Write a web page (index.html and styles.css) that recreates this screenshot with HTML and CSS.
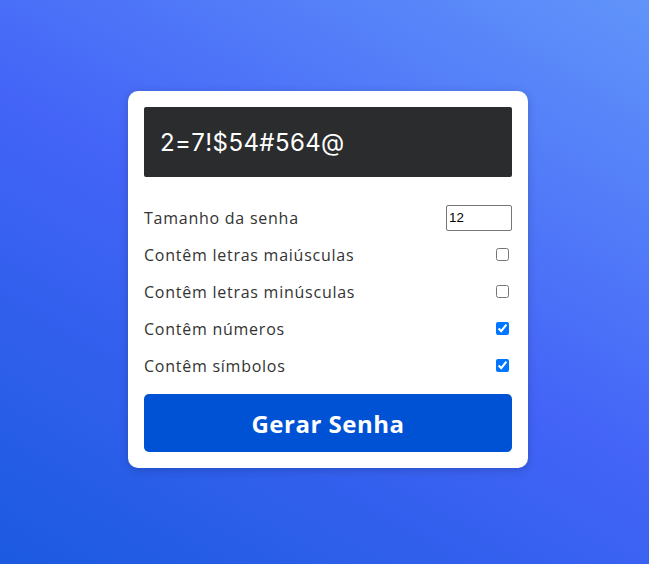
FILE: index.html
```html
<!DOCTYPE html>
<html lang="pt-BR">
<head>
<meta charset="utf-8">
<title>Gerador de Senha</title>
<link rel="stylesheet" href="styles.css">
</head>
<body>
  <main class="card">
    <div class="result">2=7!$54#564@</div>
    <div class="row">
      <label for="length">Tamanho da senha</label>
      <input type="number" id="length" class="num" value="12">
    </div>
    <div class="row">
      <label for="upper">Contêm letras maiúsculas</label>
      <input type="checkbox" id="upper">
    </div>
    <div class="row">
      <label for="lower">Contêm letras minúsculas</label>
      <input type="checkbox" id="lower">
    </div>
    <div class="row">
      <label for="numbers">Contêm números</label>
      <input type="checkbox" id="numbers" checked>
    </div>
    <div class="row">
      <label for="symbols">Contêm símbolos</label>
      <input type="checkbox" id="symbols" checked>
    </div>
    <button class="generate">Gerar Senha</button>
  </main>
</body>
</html>
```

FILE: styles.css
```css
* { box-sizing: border-box; }
html, body { height: 100%; }
body {
  margin: 0;
  padding: 0 0 5px 7px;
  display: flex;
  align-items: center;
  justify-content: center;
  background: linear-gradient(30deg, #1b5ae0, #4364f7, #6194fa);
  font-family: "Open Sans", sans-serif;
}
.card {
  width: 400px;
  background: #fff;
  border-radius: 10px;
  padding: 16px;
  box-shadow: 0 2px 10px rgba(0, 0, 0, 0.18);
}
.result {
  height: 70px;
  background: #2b2c2e;
  border-radius: 2px;
  color: #fff;
  font-family: Inter, sans-serif;
  font-size: 24px;
  letter-spacing: 0.4px;
  display: flex;
  align-items: center;
  padding: 0 16px;
  margin-bottom: 22px;
}
.row {
  height: 37px;
  display: flex;
  align-items: center;
  justify-content: space-between;
  color: #333;
  font-size: 16px;
  letter-spacing: 0.75px;
}
.num {
  width: 66px;
  height: 26px;
  font-family: Arial, "Liberation Sans", sans-serif;
  font-size: 13.33px;
  letter-spacing: 0;
  border: 1px solid #767676;
  border-radius: 2px;
  padding: 1px 2px;
}
.generate {
  display: block;
  width: 100%;
  height: 58px;
  margin-top: 10px;
  border: none;
  border-radius: 5px;
  background: #0052d4;
  color: #fff;
  font-family: "Open Sans", sans-serif;
  font-weight: 700;
  font-size: 24px;
  letter-spacing: 0.5px;
}
```
